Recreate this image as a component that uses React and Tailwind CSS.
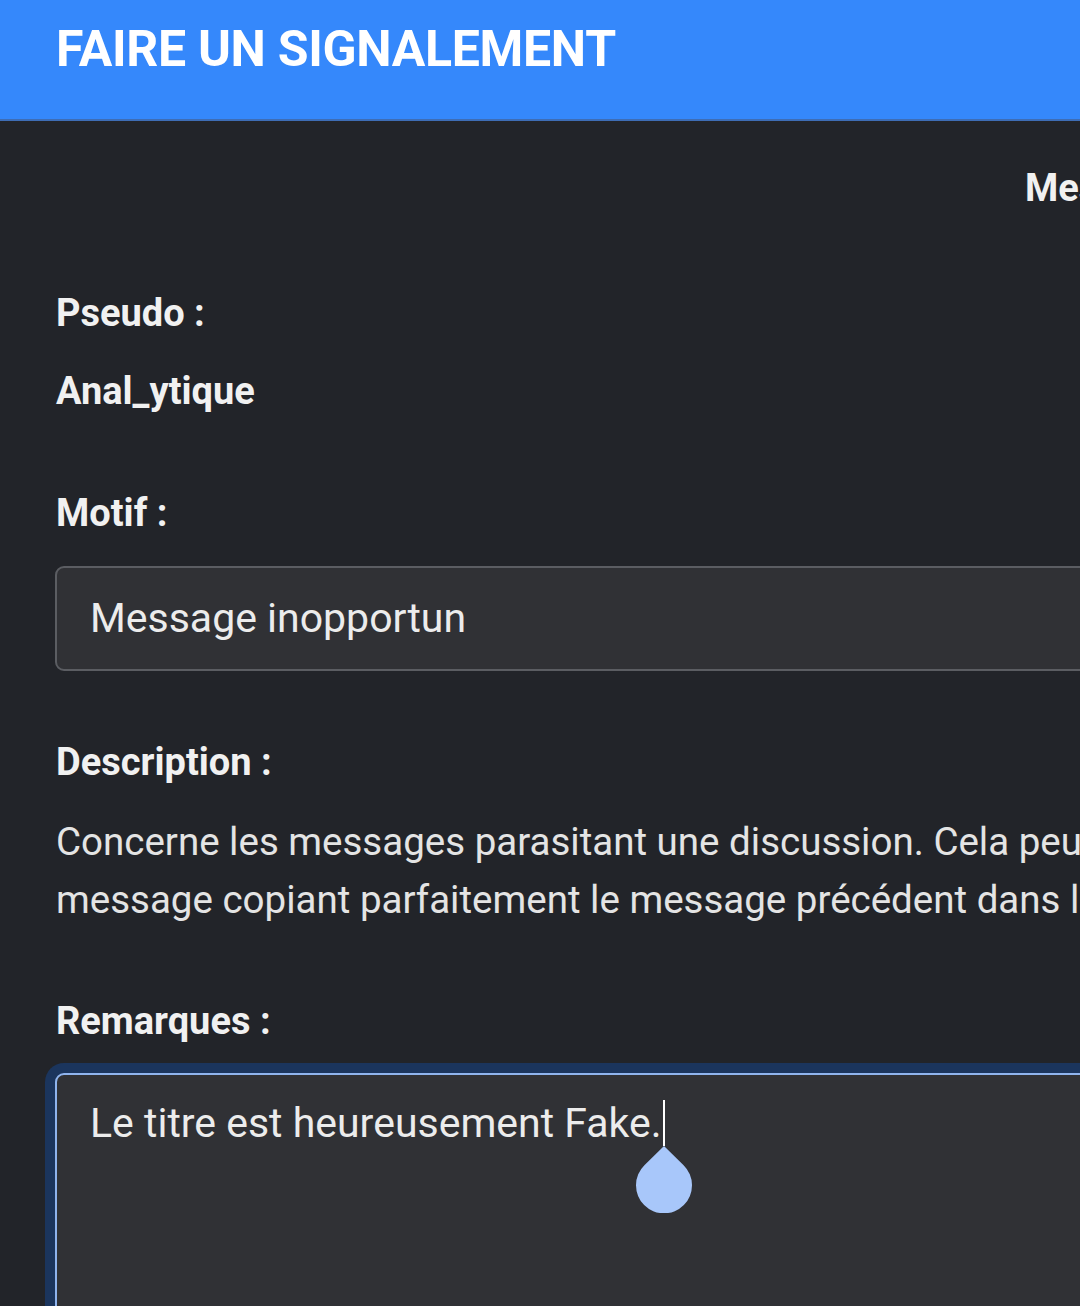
import { useState } from "react";

function Label({ children, className = "" }) {
    return (
        <h2 className={`text-[38px] leading-[46px] font-bold text-[#f1f1f1] whitespace-nowrap ${className}`}>
            {children}
        </h2>
    );
}

function Droplet() {
    return (
        <svg width="56" height="67" viewBox="0 0 56 67" className="absolute left-[-27px] top-[46px]">
            <path d="M28 0 L8.4 19.3 A28 28 0 1 0 47.6 19.3 Z" fill="#a8c7fa" />
        </svg>
    );
}

function App() {
    const [motif] = useState("Message inopportun");

    return (
        <div className="w-[1080px] h-[1306px] overflow-hidden bg-[#222429] font-['Roboto',sans-serif]">
            <header className="h-[121px] bg-[#3588fb] border-b-2 border-[#3e6db5] flex items-center px-14">
                <h1 className="text-[50px] font-bold text-white whitespace-nowrap tracking-[-0.3px] pb-[20px]">
                    FAIRE UN SIGNALEMENT
                </h1>
            </header>

            <main className="w-[1400px] px-14">
                <div className="mt-[44px] pl-[969px]">
                    <Label>Message de Anal_ytique</Label>
                </div>

                <Label className="mt-[79px]">Pseudo :</Label>
                <Label className="mt-[32px]">Anal_ytique</Label>

                <Label className="mt-[76px]">Motif :</Label>
                <div className="mt-[30px] ml-[-1px] h-[105px] w-[1300px] rounded-[9px] border-2 border-[#5b5d62] bg-[#303135] flex items-center pl-[33px]">
                    <span className="text-[41px] text-[#ececec] whitespace-nowrap">{motif}</span>
                </div>

                <Label className="mt-[68px]">Description :</Label>
                <p className="mt-[28px] text-[38.5px] leading-[58px] text-[#e4e4e4] whitespace-nowrap">
                    Concerne les messages parasitant une discussion. Cela peut être un
                    <br />
                    message copiant parfaitement le message précédent dans le sujet.
                </p>

                <Label className="mt-[69px]">Remarques :</Label>
                <div className="mt-[29px] ml-[-1px] h-[300px] w-[1300px] rounded-[9px] border-2 border-[#8fb4ee] bg-[#303135] ring-[10px] ring-[#1b355d] pl-[33px] pt-[23px]">
                    <span className="text-[41px] leading-[50px] text-[#ececec] whitespace-nowrap">
                        Le titre est heureusement Fake.
                    </span>
                    <span className="relative inline-block align-top w-[2px] h-[46px] mt-[2px] ml-[1px] bg-white">
                        <Droplet />
                    </span>
                </div>
            </main>
        </div>
    );
}

export default App;
